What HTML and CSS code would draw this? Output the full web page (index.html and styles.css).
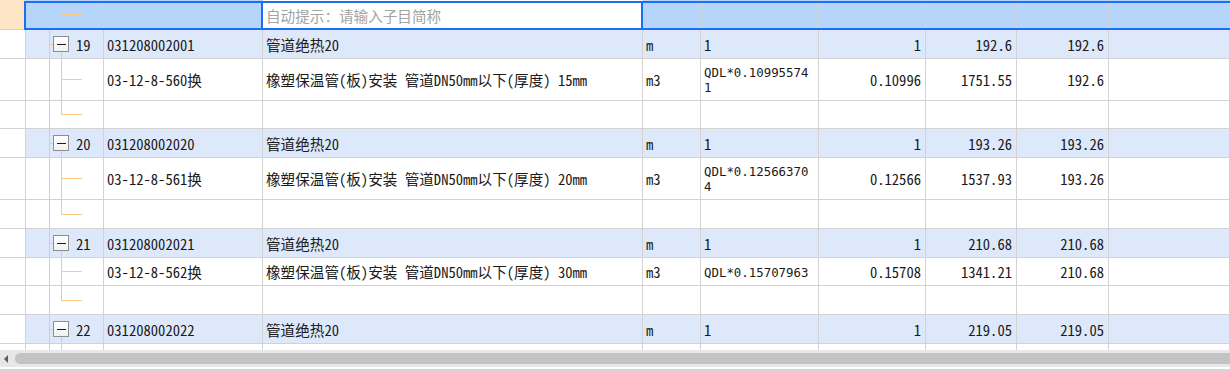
FILE: index.html
```html
<!DOCTYPE html>
<html lang="zh-CN">
<head>
<meta charset="utf-8">
<title>清单</title>
<link rel="stylesheet" href="styles.css">
</head>
<body>
<div class="sheet">
  <div class="rows">
    <div class="row sel h30">
      <div class="c hdr"></div>
      <div class="c tree last"></div>
      <div class="c"></div>
      <div class="c editor">自动提示：请输入子目简称</div>
      <div class="c"></div>
      <div class="c"></div>
      <div class="c"></div>
      <div class="c"></div>
      <div class="c"></div>
      <div class="c"></div>
    </div>

    <div class="row node h29">
      <div class="c hdr"></div>
      <div class="c tree top"><span class="tg"></span><span class="no">19</span></div>
      <div class="c">031208002001</div>
      <div class="c">管道绝热20</div>
      <div class="c">m</div>
      <div class="c">1</div>
      <div class="c num">1</div>
      <div class="c num">192.6</div>
      <div class="c num">192.6</div>
      <div class="c"></div>
    </div>
    <div class="row h42">
      <div class="c hdr"></div>
      <div class="c tree mid"></div>
      <div class="c">03-12-8-560换</div>
      <div class="c">橡塑保温管(板)安装 管道DN50mm以下(厚度) 15mm</div>
      <div class="c">m3</div>
      <div class="c expr">QDL*0.10995574<br>1</div>
      <div class="c num">0.10996</div>
      <div class="c num">1751.55</div>
      <div class="c num">192.6</div>
      <div class="c"></div>
    </div>
    <div class="row h28">
      <div class="c hdr"></div>
      <div class="c tree last"></div>
      <div class="c"></div><div class="c"></div><div class="c"></div><div class="c"></div>
      <div class="c"></div><div class="c"></div><div class="c"></div><div class="c"></div>
    </div>

    <div class="row node h29">
      <div class="c hdr"></div>
      <div class="c tree top"><span class="tg"></span><span class="no">20</span></div>
      <div class="c">031208002020</div>
      <div class="c">管道绝热20</div>
      <div class="c">m</div>
      <div class="c">1</div>
      <div class="c num">1</div>
      <div class="c num">193.26</div>
      <div class="c num">193.26</div>
      <div class="c"></div>
    </div>
    <div class="row h42">
      <div class="c hdr"></div>
      <div class="c tree mid"></div>
      <div class="c">03-12-8-561换</div>
      <div class="c">橡塑保温管(板)安装 管道DN50mm以下(厚度) 20mm</div>
      <div class="c">m3</div>
      <div class="c expr">QDL*0.12566370<br>4</div>
      <div class="c num">0.12566</div>
      <div class="c num">1537.93</div>
      <div class="c num">193.26</div>
      <div class="c"></div>
    </div>
    <div class="row h29">
      <div class="c hdr"></div>
      <div class="c tree last"></div>
      <div class="c"></div><div class="c"></div><div class="c"></div><div class="c"></div>
      <div class="c"></div><div class="c"></div><div class="c"></div><div class="c"></div>
    </div>

    <div class="row node h29">
      <div class="c hdr"></div>
      <div class="c tree top"><span class="tg"></span><span class="no">21</span></div>
      <div class="c">031208002021</div>
      <div class="c">管道绝热20</div>
      <div class="c">m</div>
      <div class="c">1</div>
      <div class="c num">1</div>
      <div class="c num">210.68</div>
      <div class="c num">210.68</div>
      <div class="c"></div>
    </div>
    <div class="row h28">
      <div class="c hdr"></div>
      <div class="c tree mid"></div>
      <div class="c">03-12-8-562换</div>
      <div class="c">橡塑保温管(板)安装 管道DN50mm以下(厚度) 30mm</div>
      <div class="c">m3</div>
      <div class="c expr">QDL*0.15707963</div>
      <div class="c num">0.15708</div>
      <div class="c num">1341.21</div>
      <div class="c num">210.68</div>
      <div class="c"></div>
    </div>
    <div class="row h29">
      <div class="c hdr"></div>
      <div class="c tree last"></div>
      <div class="c"></div><div class="c"></div><div class="c"></div><div class="c"></div>
      <div class="c"></div><div class="c"></div><div class="c"></div><div class="c"></div>
    </div>

    <div class="row node h29">
      <div class="c hdr"></div>
      <div class="c tree top"><span class="tg"></span><span class="no">22</span></div>
      <div class="c">031208002022</div>
      <div class="c">管道绝热20</div>
      <div class="c">m</div>
      <div class="c">1</div>
      <div class="c num">1</div>
      <div class="c num">219.05</div>
      <div class="c num">219.05</div>
      <div class="c"></div>
    </div>
    <div class="row h29">
      <div class="c hdr"></div>
      <div class="c tree cont"></div>
      <div class="c"></div><div class="c"></div><div class="c"></div><div class="c"></div>
      <div class="c"></div><div class="c"></div><div class="c"></div><div class="c"></div>
    </div>
  </div>

  <div class="hscroll">
    <div class="arrow"></div>
    <div class="thumb"></div>
  </div>
  <div class="gap"></div>
  <div class="base"></div>
</div>
</body>
</html>
```

FILE: styles.css
```css
* { box-sizing: border-box; }

html, body {
  margin: 0;
  padding: 0;
}

body {
  width: 1230px;
  height: 372px;
  overflow: hidden;
  background: #ffffff;
  font-family: "Noto Sans Mono CJK SC", "Noto Sans CJK SC", monospace;
  font-size: 14.6px;
  color: #1a1a1a;
}

.sheet {
  display: flex;
  flex-direction: column;
  height: 372px;
}

.rows {
  flex: none;
  height: 350px;
  overflow: hidden;
}

.row {
  position: relative;
  display: grid;
  grid-template-columns: 26px 78px 159px 380px 58px 118px 107px 91px 92px 1fr;
}

.h28 { height: 28px; }
.h29 { height: 29px; }
.h30 { height: 30px; }
.h42 { height: 42px; }

.c {
  display: flex;
  align-items: center;
  min-width: 0;
  padding: 0 3px;
  line-height: 15px;
  white-space: nowrap;
  overflow: hidden;
  border-right: 1px solid #d2d2d2;
  border-bottom: 1px solid #d2d2d2;
}

.c.num {
  justify-content: flex-end;
  padding-right: 4px;
}

.c.expr {
  font-family: "DejaVu Sans Mono", "Liberation Mono", monospace;
  font-size: 12.4px;
  line-height: 15px;
  padding-top: 1px;
}

.node .c {
  background-color: #dde9fb;
}

.node .c.hdr {
  background-color: #ffffff;
}

.sel .c {
  background-color: #b5d5fb;
}

.sel .c.hdr {
  background-color: #fde5c6;
}

.sel::after {
  content: "";
  position: absolute;
  left: 24px;
  right: -4px;
  top: 1px;
  bottom: 0;
  border: 2px solid #1b6ff5;
  pointer-events: none;
}

.sel .c.editor {
  margin: 1px 0 0 -2px;
  padding-left: 3px;
  border: 2px solid #1b6ff5;
  background-color: #ffffff;
  color: #a3a3a3;
}

/* tree connectors */
.tree {
  --t: #fbc785;
  background-image: linear-gradient(var(--t), var(--t));
  background-repeat: no-repeat;
  background-position: 23px 0;
  background-size: 1px 100%;
}

.tree.top {
  padding-left: 27px;
  background-image:
    linear-gradient(var(--t), var(--t)),
    linear-gradient(var(--t), var(--t)),
    linear-gradient(var(--t), var(--t));
  background-position: 23px 0, 23px 50%, 35px 100%;
  background-size: 1px 100%, 4px 1px, 1px calc(50% - 8px);
}

.tree.mid {
  background-image:
    linear-gradient(var(--t), var(--t)),
    linear-gradient(var(--t), var(--t)),
    linear-gradient(var(--t), var(--t));
  background-position: 23px 0, 35px 0, 35px 50%;
  background-size: 1px 100%, 1px 100%, 21px 1px;
}

.tree.last {
  background-image:
    linear-gradient(var(--t), var(--t)),
    linear-gradient(var(--t), var(--t)),
    linear-gradient(var(--t), var(--t));
  background-position: 23px 0, 35px 0, 35px 50%;
  background-size: 1px 100%, 1px 50%, 21px 1px;
}

.tree.cont {
  background-image:
    linear-gradient(var(--t), var(--t)),
    linear-gradient(var(--t), var(--t));
  background-position: 23px 0, 35px 0;
  background-size: 1px 100%, 1px 100%;
}

.tg {
  flex: none;
  width: 16px;
  height: 16px;
  margin-right: 7px;
  border: 1px solid #8d8d8d;
  background: linear-gradient(#ffffff, #f1f1f1);
  display: flex;
  align-items: center;
  justify-content: center;
}

.tg::after {
  content: "";
  width: 9px;
  height: 1px;
  background: #1a1a1a;
}

/* horizontal scrollbar */
.hscroll {
  flex: none;
  height: 17px;
  display: flex;
  align-items: center;
  background: #e7e7e7;
}

.arrow {
  flex: none;
  width: 15px;
  height: 100%;
  display: flex;
  align-items: center;
  padding-left: 4px;
}

.arrow::before {
  content: "";
  border-style: solid;
  border-width: 4px 4px 4px 0;
  border-color: transparent #5c5c5c transparent transparent;
}

.thumb {
  flex: 1;
  height: 11px;
  background: #c3c3c3;
  border-radius: 6px 0 0 6px;
}

.gap {
  flex: none;
  height: 2px;
}

.base {
  flex: none;
  height: 3px;
  background: #d4d4d4;
}
```
